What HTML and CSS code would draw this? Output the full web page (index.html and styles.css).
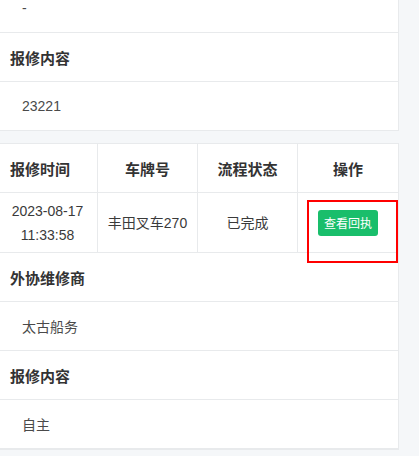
FILE: index.html
```html
<!DOCTYPE html>
<html lang="zh">
<head>
<meta charset="utf-8">
<title>报修记录</title>
<link rel="stylesheet" href="styles.css">
</head>
<body>
<div class="page">
  <section class="card">
    <div class="row value">-</div>
    <div class="row label">报修内容</div>
    <div class="row value">23221</div>
  </section>

  <section class="card card-table">
    <div class="table">
      <div class="cell head first">报修时间</div>
      <div class="cell head">车牌号</div>
      <div class="cell head">流程状态</div>
      <div class="cell head">操作</div>
      <div class="cell data">2023-08-17<br>11:33:58</div>
      <div class="cell data">丰田叉车270</div>
      <div class="cell data">已完成</div>
      <div class="cell data"><button class="btn-green">查看回执</button></div>
    </div>
    <div class="row label">外协维修商</div>
    <div class="row value">太古船务</div>
    <div class="row label">报修内容</div>
    <div class="row value">自主</div>
    <div class="highlight"></div>
  </section>
</div>
</body>
</html>
```

FILE: styles.css
```css
html, body {
  margin: 0;
  padding: 0;
  background: #f5f7f9;
  overflow: hidden;
}

body {
  font-family: "Liberation Sans", "Noto Sans CJK SC", sans-serif;
  font-size: 14px;
  color: #333;
}

.page {
  margin-top: -17px;
  margin-left: -3px;
  width: 402px;
  display: flex;
  flex-direction: column;
  gap: 12px;
}

.card {
  position: relative;
  background: #fff;
  border: 1px solid #e8eaec;
  box-sizing: border-box;
  display: flex;
  flex-direction: column;
}

.row {
  height: 48px;
  display: flex;
  align-items: center;
  border-bottom: 1px solid #e8eaec;
}

.card > .row:last-of-type {
  border-bottom: none;
}

.label {
  padding-left: 12px;
  font-size: 15px;
  font-weight: bold;
  color: #333;
}

.value {
  padding-left: 24px;
  font-size: 14px;
  color: #4a4a4a;
}

.table {
  display: grid;
  grid-template-columns: repeat(4, 1fr);
  border-bottom: 1px solid #e8eaec;
}

.cell {
  display: flex;
  align-items: center;
  justify-content: center;
  text-align: center;
  border-right: 1px solid #e8eaec;
}

.cell:nth-child(4n) {
  border-right: none;
}

.head {
  height: 48px;
  font-size: 15px;
  font-weight: bold;
  color: #333;
  border-bottom: 1px solid #e8eaec;
}

.head.first {
  justify-content: flex-start;
  padding-left: 12px;
}

.data {
  height: 59px;
  font-size: 14px;
  line-height: 24px;
  color: #3a3a3a;
}

.btn-green {
  width: 60px;
  height: 26px;
  padding: 0;
  border: none;
  border-radius: 3px;
  background: #19be6b;
  color: #fff;
  font-family: "Noto Sans CJK SC", sans-serif;
  font-size: 12px;
}

.highlight {
  position: absolute;
  left: 309px;
  top: 56px;
  width: 91px;
  height: 63px;
  border: 2px solid #f00;
  box-sizing: border-box;
}
```
